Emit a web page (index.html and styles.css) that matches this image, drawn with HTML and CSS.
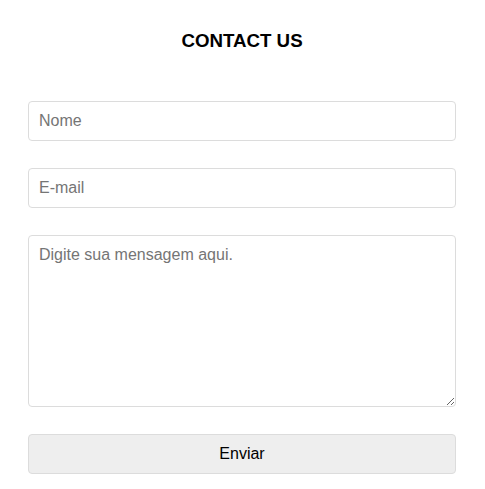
FILE: index.html
```html
<!DOCTYPE html>
<html>
<head>
<meta charset="utf-8">
<link rel="stylesheet" href="styles.css">
</head>
<body>
<div class="contact">
  <h3 class="title">CONTACT US</h3>
  <form class="form">
    <input class="field" type="text" placeholder="Nome">
    <input class="field" type="email" placeholder="E-mail">
    <textarea class="field area" placeholder="Digite sua mensagem aqui."></textarea>
    <button class="send" type="button">Enviar</button>
  </form>
</div>
</body>
</html>
```
FILE: styles.css
```css
html, body {
  margin: 0;
  padding: 0;
  background: #fff;
  font-family: "Liberation Sans", Arial, sans-serif;
}
.contact {
  width: 428px;
  margin: 0 0 0 28px;
  padding-top: 30px;
}
.title {
  margin: 0;
  text-align: center;
  font-size: 18.72px;
  line-height: 22px;
  font-weight: bold;
  color: #000;
}
.form {
  display: flex;
  flex-direction: column;
  gap: 27px;
  margin-top: 49px;
}
.field {
  box-sizing: border-box;
  width: 100%;
  height: 40px;
  border: 1px solid #dcdcdc;
  border-radius: 4px;
  padding: 0 10px;
  font-family: "Liberation Sans", Arial, sans-serif;
  font-size: 16px;
  color: #333;
  background: #fff;
  margin: 0;
}
.field::placeholder {
  color: #757575;
}
.area {
  height: 172px;
  padding: 10px;
  resize: vertical;
}
.send {
  box-sizing: border-box;
  width: 100%;
  height: 40px;
  border: 1px solid #dcdcdc;
  border-radius: 4px;
  background: #eeeeee;
  font-family: "Liberation Sans", Arial, sans-serif;
  font-size: 16px;
  color: #000;
  margin: 0;
}
```
